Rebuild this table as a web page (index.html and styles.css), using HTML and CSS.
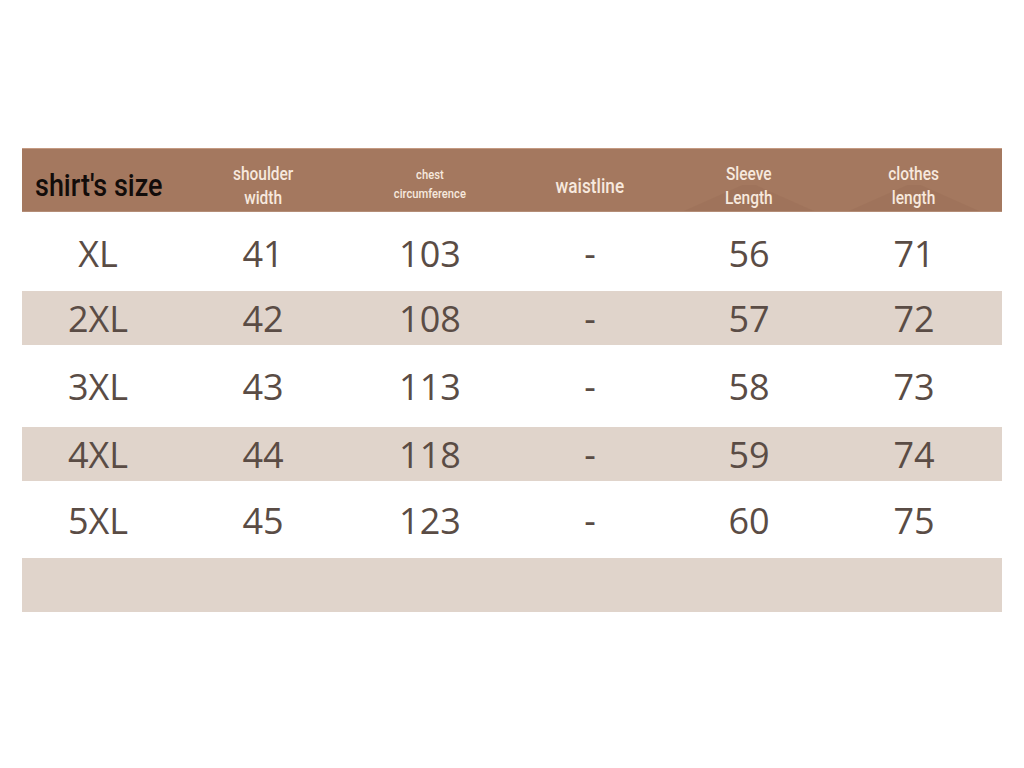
FILE: index.html
```html
<!DOCTYPE html>
<html>
<head>
<meta charset="utf-8">
<link rel="stylesheet" href="styles.css">
<title>Size chart</title>
</head>
<body>
<div class="chart">
  <div class="row head">
    <div class="cell title"><span class="sq">shirt's size</span></div>
    <div class="cell h"><span class="sq">shoulder<br>width</span></div>
    <div class="cell h small"><span class="sq">chest<br>circumference</span></div>
    <div class="cell h big"><span class="sq">waistline</span></div>
    <div class="cell h tri"><span class="sq">Sleeve<br>Length</span></div>
    <div class="cell h tri"><span class="sq">clothes<br>length</span></div>
  </div>
  <div class="row r1">
    <div class="cell">XL</div><div class="cell">41</div><div class="cell">103</div><div class="cell">-</div><div class="cell">56</div><div class="cell">71</div>
  </div>
  <div class="row band">
    <div class="cell">2XL</div><div class="cell">42</div><div class="cell">108</div><div class="cell">-</div><div class="cell">57</div><div class="cell">72</div>
  </div>
  <div class="row r3">
    <div class="cell">3XL</div><div class="cell">43</div><div class="cell">113</div><div class="cell">-</div><div class="cell">58</div><div class="cell">73</div>
  </div>
  <div class="row band">
    <div class="cell">4XL</div><div class="cell">44</div><div class="cell">118</div><div class="cell">-</div><div class="cell">59</div><div class="cell">74</div>
  </div>
  <div class="row r5">
    <div class="cell">5XL</div><div class="cell">45</div><div class="cell">123</div><div class="cell">-</div><div class="cell">60</div><div class="cell">75</div>
  </div>
  <div class="row band empty"></div>
</div>
</body>
</html>
```
FILE: styles.css
```css
html, body {
  margin: 0;
  padding: 0;
  background: #ffffff;
}
body {
  width: 1024px;
  height: 768px;
  overflow: hidden;
}
.chart {
  margin: 148px 0 0 22px;
  width: 980px;
}
.row {
  display: grid;
  grid-template-columns: 152px 178px 156px 164px 154px 176px;
  align-items: center;
  font-family: "Open Sans", "Liberation Sans", sans-serif;
  font-size: 36px;
  font-weight: 400;
  color: #5a4c45;
}
.cell {
  text-align: center;
  line-height: 1;
}
.head {
  height: 64px;
  background: #a4785f;
  border-top: 1px solid #c49a82;
  border-bottom: 1px solid #b48d77;
  box-sizing: border-box;
  font-family: Roboto, "DejaVu Sans Condensed", sans-serif;
  font-weight: 500;
  color: #f7e9de;
  position: relative;
}
.head .cell {
  font-size: 18px;
  line-height: 24px;
  position: relative;
  height: 100%;
  display: flex;
  align-items: center;
  justify-content: center;
  padding-top: 12px;
  box-sizing: border-box;
}
.sq {
  display: inline-block;
  transform: scaleX(0.86);
}
.head .title {
  font-size: 31px;
  color: #120c0a;
  justify-content: flex-start;
  padding: 12px 0 0 13px;
}
.head .title .sq {
  transform-origin: left center;
  transform: scaleX(0.87);
  white-space: nowrap;
}
.head .small {
  font-size: 13px;
  line-height: 19px;
  padding-top: 8px;
}
.head .big {
  font-size: 20px;
  padding-top: 11px;
}
.head .tri::before {
  content: "";
  position: absolute;
  left: 50%;
  bottom: 0;
  width: 130px;
  height: 26px;
  transform: translateX(-50%);
  background: #9c7058;
  clip-path: polygon(0 100%, 45% 0, 55% 0, 100% 100%);
  opacity: 0.6;
  z-index: -1;
}
.head .tri {
  z-index: 0;
}
.r1 { height: 79px; padding-top: 5px; box-sizing: border-box; }
.r3 { height: 82px; padding-top: 2px; box-sizing: border-box; }
.r5 { height: 77px; padding-top: 2px; box-sizing: border-box; }
.band {
  height: 54px;
  background: #e0d4cb;
  padding-top: 2px;
  box-sizing: border-box;
}
.empty { height: 54px; }
```
